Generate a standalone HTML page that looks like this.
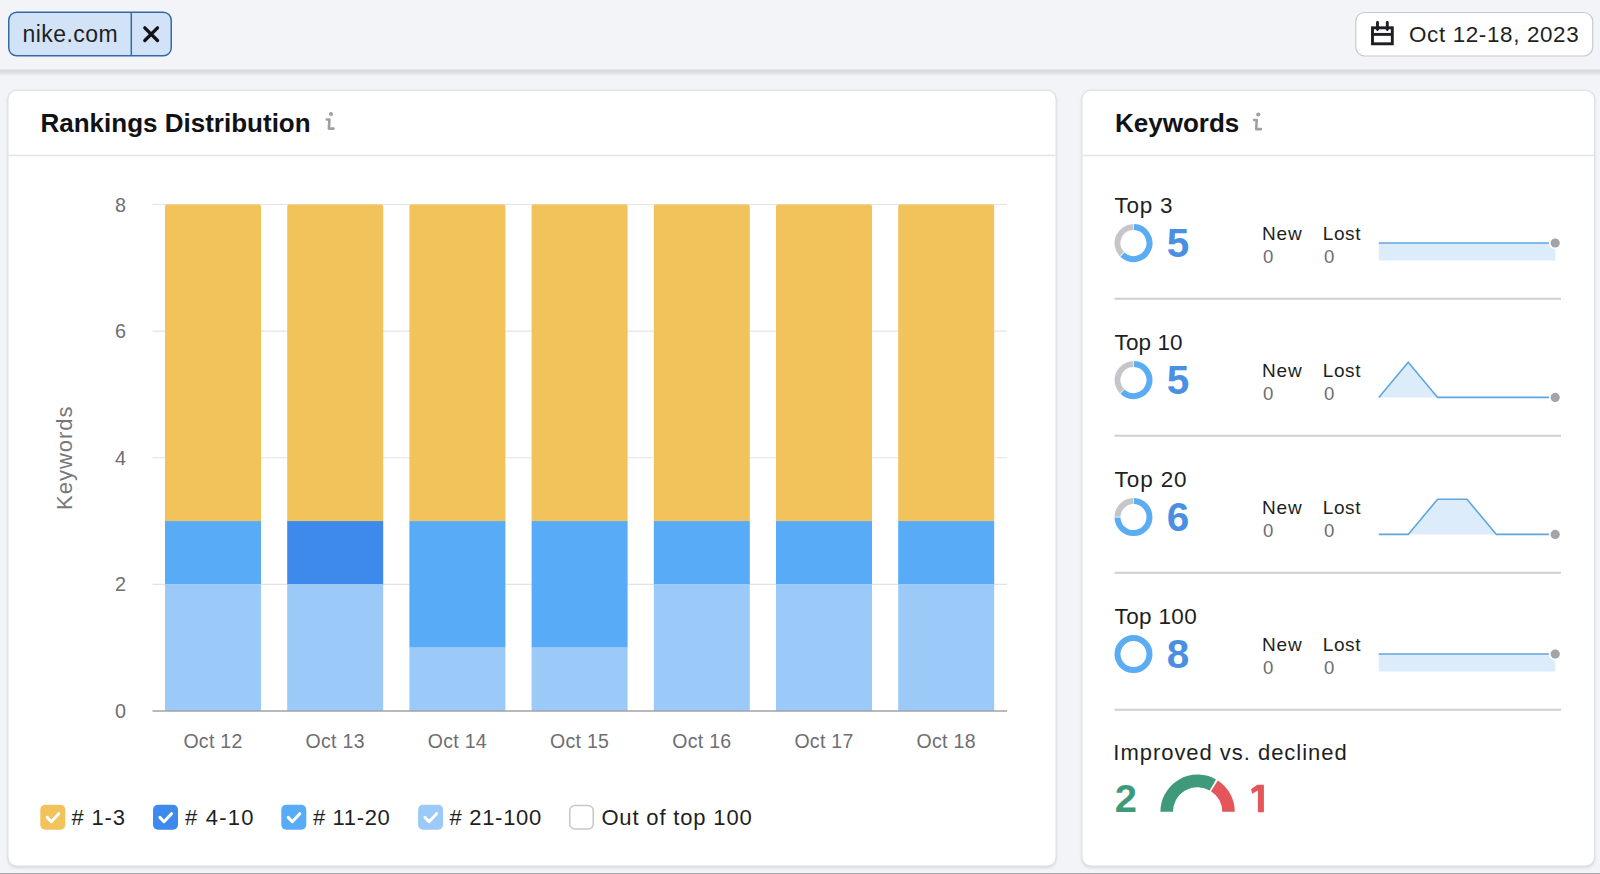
<!DOCTYPE html>
<html>
<head>
<meta charset="utf-8">
<style>
html,body{margin:0;padding:0;width:1600px;height:874px;overflow:hidden;background:#f3f4f8;}
svg{display:block;}
text{font-family:"Liberation Sans",sans-serif;}
</style>
</head>
<body>
<svg width="1600" height="874" viewBox="0 0 1600 874">
<defs>
<linearGradient id="topshadow" x1="0" y1="0" x2="0" y2="1">
<stop offset="0" stop-color="#d5d6db"/><stop offset="0.4" stop-color="#dddee3"/><stop offset="1" stop-color="#f3f4f8"/>
</linearGradient>
<linearGradient id="cardfade" x1="0" y1="0" x2="0" y2="1">
<stop offset="0" stop-color="#f4f4f4" stop-opacity="0"/><stop offset="1" stop-color="#f4f4f4" stop-opacity="1"/>
</linearGradient>
<filter id="blur" x="-5%" y="-5%" width="110%" height="110%"><feGaussianBlur stdDeviation="1.6"/></filter>
</defs>
<rect x="0" y="0" width="1600" height="874" fill="#f3f4f8"/>
<rect x="0" y="69.5" width="1600" height="7" fill="url(#topshadow)"/>
<rect x="8.75" y="12.25" width="162.5" height="43.5" rx="8" ry="8" fill="#d2e3f8" stroke="#336aa6" stroke-width="1.5"/>
<line x1="131.3" y1="12.5" x2="131.3" y2="55.5" stroke="#336aa6" stroke-width="1.5"/>
<text x="22.5" y="41.8" font-size="23" letter-spacing="0.45" fill="#1e1f23">nike.com</text>
<path d="M144.8 27.8 L157.5 40.5 M157.5 27.8 L144.8 40.5" stroke="#111215" stroke-width="3.3" stroke-linecap="round" fill="none"/>
<rect x="1355.75" y="12.5" width="237" height="43.5" rx="9" ry="9" fill="#ffffff" stroke="#c7c8cb" stroke-width="1.2"/>
<g stroke="#1e1f23" stroke-width="2.9" fill="none"><rect x="1372.5" y="27.8" width="19.8" height="16"/><line x1="1372.5" y1="34.4" x2="1392.3" y2="34.4"/><line x1="1377.5" y1="22.5" x2="1377.5" y2="29.5" stroke-linecap="round"/><line x1="1387.3" y1="22.5" x2="1387.3" y2="29.5" stroke-linecap="round"/></g>
<text x="1409" y="42.2" font-size="22.4" letter-spacing="0.65" fill="#1e1f23">Oct 12-18, 2023</text>
<rect x="7.5" y="90.8" width="1049.0" height="777.2" rx="9" ry="9" fill="#000" opacity="0.10" filter="url(#blur)"/>
<rect x="8.0" y="90.3" width="1048.0" height="775.7" rx="9" ry="9" fill="#ffffff" stroke="#dddee2" stroke-width="1"/>
<line x1="8.5" y1="155.5" x2="1055.5" y2="155.5" stroke="#e3e4e7" stroke-width="1.3"/>
<text x="40.5" y="132.3" font-size="26" font-weight="bold" fill="#111215">Rankings Distribution</text>
<g stroke="#a0a0a4" stroke-width="2.6" fill="none" stroke-linecap="round" stroke-linejoin="round"><path d="M326.8 119.5 L329.4 119.5 L328.9 128.6 L333.6 128.6"/></g><circle cx="331" cy="114" r="2.1" fill="#a0a0a4"/>
<line x1="152.5" y1="584.38" x2="1007" y2="584.38" stroke="#e3e3e5" stroke-width="1.2"/>
<line x1="152.5" y1="457.75" x2="1007" y2="457.75" stroke="#e3e3e5" stroke-width="1.2"/>
<line x1="152.5" y1="331.12" x2="1007" y2="331.12" stroke="#e3e3e5" stroke-width="1.2"/>
<line x1="152.5" y1="204.50" x2="1007" y2="204.50" stroke="#e3e3e5" stroke-width="1.2"/>
<text x="126" y="718.00" font-size="19.8" fill="#6e6e73" text-anchor="end">0</text>
<text x="126" y="591.38" font-size="19.8" fill="#6e6e73" text-anchor="end">2</text>
<text x="126" y="464.75" font-size="19.8" fill="#6e6e73" text-anchor="end">4</text>
<text x="126" y="338.12" font-size="19.8" fill="#6e6e73" text-anchor="end">6</text>
<text x="126" y="211.50" font-size="19.8" fill="#6e6e73" text-anchor="end">8</text>
<path d="M165.00 521.06 L165.00 206.50 Q165.00 204.50 167.00 204.50 L259.00 204.50 Q261.00 204.50 261.00 206.50 L261.00 521.06 Z" fill="#f2c35b"/>
<rect x="165.00" y="521.06" width="96" height="63.31" fill="#58acf7"/>
<rect x="165.00" y="584.38" width="96" height="126.62" fill="#9ccaf8"/>
<text x="213.00" y="748" font-size="19.5" letter-spacing="0.3" fill="#6e6e73" text-anchor="middle">Oct 12</text>
<path d="M287.20 521.06 L287.20 206.50 Q287.20 204.50 289.20 204.50 L381.20 204.50 Q383.20 204.50 383.20 206.50 L383.20 521.06 Z" fill="#f2c35b"/>
<rect x="287.20" y="521.06" width="96" height="63.31" fill="#3d89ec"/>
<rect x="287.20" y="584.38" width="96" height="126.62" fill="#9ccaf8"/>
<text x="335.20" y="748" font-size="19.5" letter-spacing="0.3" fill="#6e6e73" text-anchor="middle">Oct 13</text>
<path d="M409.40 521.06 L409.40 206.50 Q409.40 204.50 411.40 204.50 L503.40 204.50 Q505.40 204.50 505.40 206.50 L505.40 521.06 Z" fill="#f2c35b"/>
<rect x="409.40" y="521.06" width="96" height="126.62" fill="#58acf7"/>
<rect x="409.40" y="647.69" width="96" height="63.31" fill="#9ccaf8"/>
<text x="457.40" y="748" font-size="19.5" letter-spacing="0.3" fill="#6e6e73" text-anchor="middle">Oct 14</text>
<path d="M531.60 521.06 L531.60 206.50 Q531.60 204.50 533.60 204.50 L625.60 204.50 Q627.60 204.50 627.60 206.50 L627.60 521.06 Z" fill="#f2c35b"/>
<rect x="531.60" y="521.06" width="96" height="126.62" fill="#58acf7"/>
<rect x="531.60" y="647.69" width="96" height="63.31" fill="#9ccaf8"/>
<text x="579.60" y="748" font-size="19.5" letter-spacing="0.3" fill="#6e6e73" text-anchor="middle">Oct 15</text>
<path d="M653.80 521.06 L653.80 206.50 Q653.80 204.50 655.80 204.50 L747.80 204.50 Q749.80 204.50 749.80 206.50 L749.80 521.06 Z" fill="#f2c35b"/>
<rect x="653.80" y="521.06" width="96" height="63.31" fill="#58acf7"/>
<rect x="653.80" y="584.38" width="96" height="126.62" fill="#9ccaf8"/>
<text x="701.80" y="748" font-size="19.5" letter-spacing="0.3" fill="#6e6e73" text-anchor="middle">Oct 16</text>
<path d="M776.00 521.06 L776.00 206.50 Q776.00 204.50 778.00 204.50 L870.00 204.50 Q872.00 204.50 872.00 206.50 L872.00 521.06 Z" fill="#f2c35b"/>
<rect x="776.00" y="521.06" width="96" height="63.31" fill="#58acf7"/>
<rect x="776.00" y="584.38" width="96" height="126.62" fill="#9ccaf8"/>
<text x="824.00" y="748" font-size="19.5" letter-spacing="0.3" fill="#6e6e73" text-anchor="middle">Oct 17</text>
<path d="M898.20 521.06 L898.20 206.50 Q898.20 204.50 900.20 204.50 L992.20 204.50 Q994.20 204.50 994.20 206.50 L994.20 521.06 Z" fill="#f2c35b"/>
<rect x="898.20" y="521.06" width="96" height="63.31" fill="#58acf7"/>
<rect x="898.20" y="584.38" width="96" height="126.62" fill="#9ccaf8"/>
<text x="946.20" y="748" font-size="19.5" letter-spacing="0.3" fill="#6e6e73" text-anchor="middle">Oct 18</text>
<line x1="152.5" y1="711.0" x2="1007" y2="711.0" stroke="#a2a2a6" stroke-width="1.3"/>
<text transform="translate(72.3 457.7) rotate(-90)" font-size="22" fill="#77777b" text-anchor="middle" letter-spacing="1.0">Keywords</text>
<rect x="40.3" y="804.8" width="25" height="25" rx="5" ry="5" fill="#f2c35b"/><path d="M47.199999999999996 817.4 L51.3 821.6999999999999 L58.8 813.6999999999999" stroke="#ffffff" stroke-width="3" fill="none" stroke-linecap="round" stroke-linejoin="round"/>
<text x="71.6" y="825" font-size="22" letter-spacing="0.81" fill="#1e1f23"># 1-3</text>
<rect x="153.0" y="804.8" width="25" height="25" rx="5" ry="5" fill="#3d89ec"/><path d="M159.9 817.4 L164.0 821.6999999999999 L171.5 813.6999999999999" stroke="#ffffff" stroke-width="3" fill="none" stroke-linecap="round" stroke-linejoin="round"/>
<text x="185.0" y="825" font-size="22" letter-spacing="1.2" fill="#1e1f23"># 4-10</text>
<rect x="281.3" y="804.8" width="25" height="25" rx="5" ry="5" fill="#58acf7"/><path d="M288.2 817.4 L292.3 821.6999999999999 L299.8 813.6999999999999" stroke="#ffffff" stroke-width="3" fill="none" stroke-linecap="round" stroke-linejoin="round"/>
<text x="312.9" y="825" font-size="22" letter-spacing="0.65" fill="#1e1f23"># 11-20</text>
<rect x="418.1" y="804.8" width="25" height="25" rx="5" ry="5" fill="#9ccaf8"/><path d="M425.0 817.4 L429.1 821.6999999999999 L436.6 813.6999999999999" stroke="#ffffff" stroke-width="3" fill="none" stroke-linecap="round" stroke-linejoin="round"/>
<text x="449.4" y="825" font-size="22" letter-spacing="0.72" fill="#1e1f23"># 21-100</text>
<rect x="569.75" y="805.55" width="23.5" height="23.5" rx="5" ry="5" fill="#ffffff" stroke="#c6c6ca" stroke-width="1.5"/>
<text x="601.4" y="825" font-size="22" letter-spacing="0.84" fill="#1e1f23">Out of top 100</text>
<rect x="1081.5" y="90.8" width="513.5" height="777.2" rx="9" ry="9" fill="#000" opacity="0.10" filter="url(#blur)"/>
<rect x="1082.0" y="90.3" width="512.5" height="775.7" rx="9" ry="9" fill="#ffffff" stroke="#dddee2" stroke-width="1"/>
<line x1="1082.5" y1="155.5" x2="1594" y2="155.5" stroke="#e3e4e7" stroke-width="1.3"/>
<text x="1115" y="131.8" font-size="26" font-weight="bold" fill="#111215">Keywords</text>
<g stroke="#a0a0a4" stroke-width="2.6" fill="none" stroke-linecap="round" stroke-linejoin="round"><path d="M1254.1 120.0 L1256.7 120.0 L1256.2 129.1 L1260.8999999999999 129.1"/></g><circle cx="1258.3" cy="114.5" r="2.1" fill="#a0a0a4"/>
<text x="1114.6" y="212.5" font-size="22.5" letter-spacing="0.69" fill="#1e1f23">Top 3</text>
<path d="M1133.84 227.10 A16 16 0 1 1 1122.43 254.65" fill="none" stroke="#5aacf3" stroke-width="6"/>
<path d="M1121.95 254.17 A16 16 0 0 1 1133.16 227.10" fill="none" stroke="#c5c6ca" stroke-width="6"/>
<text x="1166.8" y="257.3" font-size="40" font-weight="bold" fill="#4a8fe2" textLength="22.5" lengthAdjust="spacingAndGlyphs">5</text>
<text x="1262" y="239.9" font-size="19" letter-spacing="0.85" fill="#1e1f23">New</text>
<text x="1322.8" y="239.9" font-size="19" letter-spacing="0.57" fill="#1e1f23">Lost</text>
<text x="1263" y="262.6" font-size="18.6" fill="#6e6e73">0</text>
<text x="1324" y="262.6" font-size="18.6" fill="#6e6e73">0</text>
<rect x="1378.8" y="243" width="176.39999999999986" height="17.5" fill="#dcecfb"/>
<polyline points="1378.80,243.00 1408.20,243.00 1437.60,243.00 1467.00,243.00 1496.40,243.00 1525.80,243.00 1555.20,243.00" fill="none" stroke="#5ea6dc" stroke-width="1.6" stroke-linejoin="miter"/>
<circle cx="1555.20" cy="243.00" r="6.3" fill="#ffffff"/><circle cx="1555.20" cy="243.00" r="4.6" fill="#a3a3aa"/>
<line x1="1114.5" y1="298.7" x2="1561" y2="298.7" stroke="#cfcfd2" stroke-width="1.9"/>
<text x="1114.6" y="349.5" font-size="22.5" letter-spacing="0.07" fill="#1e1f23">Top 10</text>
<path d="M1133.84 364.10 A16 16 0 1 1 1122.43 391.65" fill="none" stroke="#5aacf3" stroke-width="6"/>
<path d="M1121.95 391.17 A16 16 0 0 1 1133.16 364.10" fill="none" stroke="#c5c6ca" stroke-width="6"/>
<text x="1166.8" y="394.3" font-size="40" font-weight="bold" fill="#4a8fe2" textLength="22.5" lengthAdjust="spacingAndGlyphs">5</text>
<text x="1262" y="376.9" font-size="19" letter-spacing="0.85" fill="#1e1f23">New</text>
<text x="1322.8" y="376.9" font-size="19" letter-spacing="0.57" fill="#1e1f23">Lost</text>
<text x="1263" y="399.6" font-size="18.6" fill="#6e6e73">0</text>
<text x="1324" y="399.6" font-size="18.6" fill="#6e6e73">0</text>
<polygon points="1378.80,397.40 1378.80,397.40 1408.20,362.30 1437.60,397.40 1467.00,397.40 1496.40,397.40 1525.80,397.40 1555.20,397.40 1555.20,397.40" fill="#dcecfb"/>
<polyline points="1378.80,397.40 1408.20,362.30 1437.60,397.40 1467.00,397.40 1496.40,397.40 1525.80,397.40 1555.20,397.40" fill="none" stroke="#5ea6dc" stroke-width="1.6" stroke-linejoin="miter"/>
<circle cx="1555.20" cy="397.40" r="6.3" fill="#ffffff"/><circle cx="1555.20" cy="397.40" r="4.6" fill="#a3a3aa"/>
<line x1="1114.5" y1="435.7" x2="1561" y2="435.7" stroke="#cfcfd2" stroke-width="1.9"/>
<text x="1114.6" y="486.5" font-size="22.5" letter-spacing="0.89" fill="#1e1f23">Top 20</text>
<path d="M1133.84 501.10 A16 16 0 1 1 1117.50 517.44" fill="none" stroke="#5aacf3" stroke-width="6"/>
<path d="M1117.50 516.76 A16 16 0 0 1 1133.16 501.10" fill="none" stroke="#c5c6ca" stroke-width="6"/>
<text x="1166.8" y="531.3" font-size="40" font-weight="bold" fill="#4a8fe2" textLength="22.5" lengthAdjust="spacingAndGlyphs">6</text>
<text x="1262" y="513.9" font-size="19" letter-spacing="0.85" fill="#1e1f23">New</text>
<text x="1322.8" y="513.9" font-size="19" letter-spacing="0.57" fill="#1e1f23">Lost</text>
<text x="1263" y="536.6" font-size="18.6" fill="#6e6e73">0</text>
<text x="1324" y="536.6" font-size="18.6" fill="#6e6e73">0</text>
<polygon points="1378.80,534.40 1378.80,534.40 1408.20,534.40 1437.60,499.30 1467.00,499.30 1496.40,534.40 1525.80,534.40 1555.20,534.40 1555.20,534.40" fill="#dcecfb"/>
<polyline points="1378.80,534.40 1408.20,534.40 1437.60,499.30 1467.00,499.30 1496.40,534.40 1525.80,534.40 1555.20,534.40" fill="none" stroke="#5ea6dc" stroke-width="1.6" stroke-linejoin="miter"/>
<circle cx="1555.20" cy="534.40" r="6.3" fill="#ffffff"/><circle cx="1555.20" cy="534.40" r="4.6" fill="#a3a3aa"/>
<line x1="1114.5" y1="572.7" x2="1561" y2="572.7" stroke="#cfcfd2" stroke-width="1.9"/>
<text x="1114.6" y="623.5" font-size="22.5" letter-spacing="0.34" fill="#1e1f23">Top 100</text>
<circle cx="1133.5" cy="654.1" r="16" fill="none" stroke="#5aacf3" stroke-width="6"/>
<text x="1166.8" y="668.3" font-size="40" font-weight="bold" fill="#4a8fe2" textLength="22.5" lengthAdjust="spacingAndGlyphs">8</text>
<text x="1262" y="650.9" font-size="19" letter-spacing="0.85" fill="#1e1f23">New</text>
<text x="1322.8" y="650.9" font-size="19" letter-spacing="0.57" fill="#1e1f23">Lost</text>
<text x="1263" y="673.6" font-size="18.6" fill="#6e6e73">0</text>
<text x="1324" y="673.6" font-size="18.6" fill="#6e6e73">0</text>
<rect x="1378.8" y="654" width="176.39999999999986" height="17.5" fill="#dcecfb"/>
<polyline points="1378.80,654.00 1408.20,654.00 1437.60,654.00 1467.00,654.00 1496.40,654.00 1525.80,654.00 1555.20,654.00" fill="none" stroke="#5ea6dc" stroke-width="1.6" stroke-linejoin="miter"/>
<circle cx="1555.20" cy="654.00" r="6.3" fill="#ffffff"/><circle cx="1555.20" cy="654.00" r="4.6" fill="#a3a3aa"/>
<line x1="1114.5" y1="709.7" x2="1561" y2="709.7" stroke="#cfcfd2" stroke-width="1.9"/>
<text x="1113.3" y="759.5" font-size="22" letter-spacing="0.97" fill="#1e1f23">Improved vs. declined</text>
<text x="1114.8" y="812.1" font-size="39.5" font-weight="bold" fill="#3f9a7b" textLength="22.2" lengthAdjust="spacingAndGlyphs">2</text>
<path d="M1257.2 784.8 L1263.9 784.8 L1263.9 812.3 L1257.9 812.3 L1257.9 790.6 L1252.2 793.8 L1251.0 789.2 Z" fill="#e4565a"/>
<path d="M1166.70 811.80 A30.9 30.9 0 0 1 1212.82 784.91" fill="none" stroke="#3f9a7b" stroke-width="12.6"/>
<path d="M1214.43 785.89 A30.9 30.9 0 0 1 1228.50 811.80" fill="none" stroke="#e4565a" stroke-width="12.6"/>
<rect x="0" y="873" width="1600" height="1" fill="#a9aaae"/>
</svg>
</body>
</html>
